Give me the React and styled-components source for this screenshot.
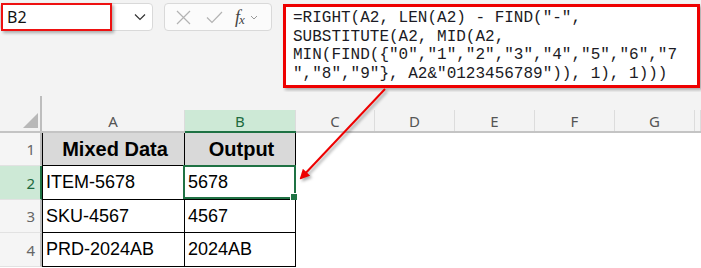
import React from "react";
import styled, { createGlobalStyle } from "styled-components";

const GlobalStyle = createGlobalStyle`
  html, body {
    margin: 0;
    padding: 0;
    background: #ffffff;
  }
  * {
    box-sizing: border-box;
  }
`;

const Page = styled.div`
  position: relative;
  width: 701px;
  height: 268px;
  overflow: hidden;
  background: #ffffff;
  font-family: "Liberation Sans", Arial, sans-serif;
`;

const FormulaBar = styled.div`
  display: flex;
  align-items: flex-start;
  gap: 11px;
  height: 92px;
  padding-top: 3px;
  background: #f3f3f3;
`;

const NameBox = styled.div`
  position: relative;
  display: flex;
  align-items: center;
  justify-content: space-between;
  width: 153px;
  height: 28px;
  padding: 0 6px;
  background: #ffffff;
  border: 1px solid #d9d9d9;
  border-radius: 4px;
  font-family: "Noto Sans", "Open Sans", sans-serif;
  font-size: 16px;
  color: #111;
`;

const Highlight = styled.div`
  position: absolute;
  left: 0;
  top: -1px;
  width: 111px;
  height: 28px;
  border: 2px solid #ee1111;
  box-shadow: 2px 2px 3px rgba(0, 0, 0, 0.3);
`;

const ButtonGroup = styled.div`
  display: flex;
  align-items: center;
  width: 108px;
  height: 28px;
  padding-left: 11px;
  gap: 15px;
  background: #fbfbfb;
  border: 1px solid #d9d9d9;
  border-radius: 4px;
`;

const Fx = styled.span`
  display: flex;
  align-items: center;
  margin-left: -3px;
  font-family: "Liberation Serif", serif;
  font-style: italic;
  font-size: 18px;
  color: #444;

  sub {
    font-size: 13px;
    margin-top: 6px;
    margin-left: -1px;
  }
`;

const FormulaBox = styled.div`
  width: 417px;
  height: 84px;
  margin-top: 1px;
  padding: 2px 0 0 7px;
  background: #ffffff;
  border: 3px solid #ee0000;
  box-shadow: 2px 2px 3px rgba(0, 0, 0, 0.3);
  font-family: "Liberation Mono", "Courier New", monospace;
  font-size: 16px;
  line-height: 18.5px;
  color: #1b1b24;
  white-space: pre;
`;

const Sheet = styled.div`
  display: grid;
  grid-template-columns: 42px 143px 111px 79px 80px 80px 80px 80px 1fr;
  grid-template-rows: 41px 33px 34px 33px 34px;
  background: #ffffff;
`;

const Corner = styled.div`
  position: relative;
  background: #f3f3f3;
  border-bottom: 2px solid #c4c4c4;

  &::before {
    content: "";
    position: absolute;
    right: 0;
    top: 4px;
    bottom: 0;
    width: 2px;
    background: #bdbdbd;
  }

  &::after {
    content: "";
    position: absolute;
    right: 4px;
    bottom: 3px;
    width: 0;
    height: 0;
    border-left: 15px solid transparent;
    border-bottom: 15px solid #b8b8b8;
  }
`;

const ColHead = styled.div`
  display: flex;
  align-items: flex-end;
  background: #f3f3f3;
  border-bottom: 2px solid ${({ active }) => (active ? "#1f7244" : "#c4c4c4")};
`;

const ColLabel = styled.div`
  flex: 1;
  height: 21px;
  display: flex;
  align-items: center;
  justify-content: center;
  background: ${({ active }) => (active ? "#cde9d6" : "transparent")};
  border-right: 1px solid #dcdcdc;
  font-family: "Noto Sans", "Open Sans", sans-serif;
  font-size: 15px;
  color: ${({ active }) => (active ? "#1e6b3f" : "#555")};
`;

const RowHead = styled.div`
  display: flex;
  align-items: center;
  justify-content: flex-end;
  padding-right: 5px;
  background: ${({ active }) => (active ? "#cde9d6" : "#f5f5f5")};
  border-right: 2px solid ${({ active }) => (active ? "#1f7244" : "#bdbdbd")};
  border-bottom: 1px solid #e2e2e2;
  font-family: "Noto Sans", "Open Sans", sans-serif;
  font-size: 15px;
  color: ${({ active }) => (active ? "#1e6b3f" : "#666")};
`;

const Cell = styled.div`
  position: relative;
  display: flex;
  align-items: center;
  justify-content: ${({ head }) => (head ? "center" : "flex-start")};
  padding-left: 3px;
  background: ${({ head }) => (head ? "#d9d9d9" : "#ffffff")};
  border-left: ${({ first }) => (first ? "1px solid #000" : "none")};
  border-right: 1px solid #000;
  border-bottom: 1px solid #000;
  font-size: ${({ head }) => (head ? "20px" : "18px")};
  font-weight: ${({ head }) => (head ? 700 : 400)};
  color: #000;
`;

const Blank = styled.div`
  background: #ffffff;
`;

const Selection = styled.div`
  position: absolute;
  left: -2px;
  top: -1px;
  right: -1px;
  bottom: 0;
  border: 2px solid #1f7244;
  pointer-events: none;

  &::after {
    content: "";
    position: absolute;
    right: -4px;
    bottom: -4px;
    width: 6px;
    height: 6px;
    background: #1f7244;
    border: 1px solid #ffffff;
  }
`;

const Arrow = styled.svg`
  position: absolute;
  left: 0;
  top: 0;
  filter: drop-shadow(2px 2px 1.5px rgba(0, 0, 0, 0.35));
  pointer-events: none;
`;

const columns = ["C", "D", "E", "F", "G", ""];

const rows = [
  ["Mixed Data", "Output"],
  ["ITEM-5678", "5678"],
  ["SKU-4567", "4567"],
  ["PRD-2024AB", "2024AB"],
];

const formula = `=RIGHT(A2, LEN(A2) - FIND("-",
SUBSTITUTE(A2, MID(A2,
MIN(FIND({"0","1","2","3","4","5","6","7
","8","9"}, A2&"0123456789")), 1), 1)))`;

export default function App() {
  return (
    <Page>
      <GlobalStyle />
      <FormulaBar>
        <NameBox>
          <span>B2</span>
          <svg width="12" height="8" viewBox="0 0 12 8">
            <polyline points="1,1.5 6,6.5 11,1.5" fill="none" stroke="#333" strokeWidth="1.2" />
          </svg>
          <Highlight />
        </NameBox>
        <ButtonGroup>
          <svg width="15" height="15" viewBox="0 0 15 15">
            <path d="M1 1 L14 14 M14 1 L1 14" stroke="#b3b3b3" strokeWidth="1.2" />
          </svg>
          <svg width="17" height="13" viewBox="0 0 17 13">
            <polyline points="1,6.5 6,11.5 16,1" fill="none" stroke="#b3b3b3" strokeWidth="1.2" />
          </svg>
          <Fx>
            f<sub>x</sub>
            <svg width="8" height="5" viewBox="0 0 8 5" style={{ marginLeft: 5 }}>
              <polyline points="1,1 4,4 7,1" fill="none" stroke="#999" strokeWidth="1" />
            </svg>
          </Fx>
        </ButtonGroup>
        <FormulaBox>{formula}</FormulaBox>
      </FormulaBar>

      <Sheet>
        <Corner />
        <ColHead>
          <ColLabel>A</ColLabel>
        </ColHead>
        <ColHead active>
          <ColLabel active>B</ColLabel>
        </ColHead>
        {columns.map((c, i) => (
          <ColHead key={i}>
            <ColLabel>{c}</ColLabel>
          </ColHead>
        ))}

        {rows.map((r, i) => (
          <React.Fragment key={i}>
            <RowHead active={i === 1}>{i + 1}</RowHead>
            <Cell head={i === 0} first>
              {r[0]}
            </Cell>
            <Cell head={i === 0}>
              {r[1]}
              {i === 1 && <Selection />}
            </Cell>
            {columns.map((c, j) => (
              <Blank key={j} />
            ))}
          </React.Fragment>
        ))}
      </Sheet>

      <Arrow width="701" height="268">
        <defs>
          <marker id="head" markerWidth="10" markerHeight="10" refX="8" refY="5" orient="auto" markerUnits="userSpaceOnUse">
            <path d="M0 0 L10 5 L0 10 Z" fill="#ee0000" />
          </marker>
        </defs>
        <line x1="385" y1="89" x2="301" y2="178" stroke="#ee0000" strokeWidth="2" markerEnd="url(#head)" />
      </Arrow>
    </Page>
  );
}
